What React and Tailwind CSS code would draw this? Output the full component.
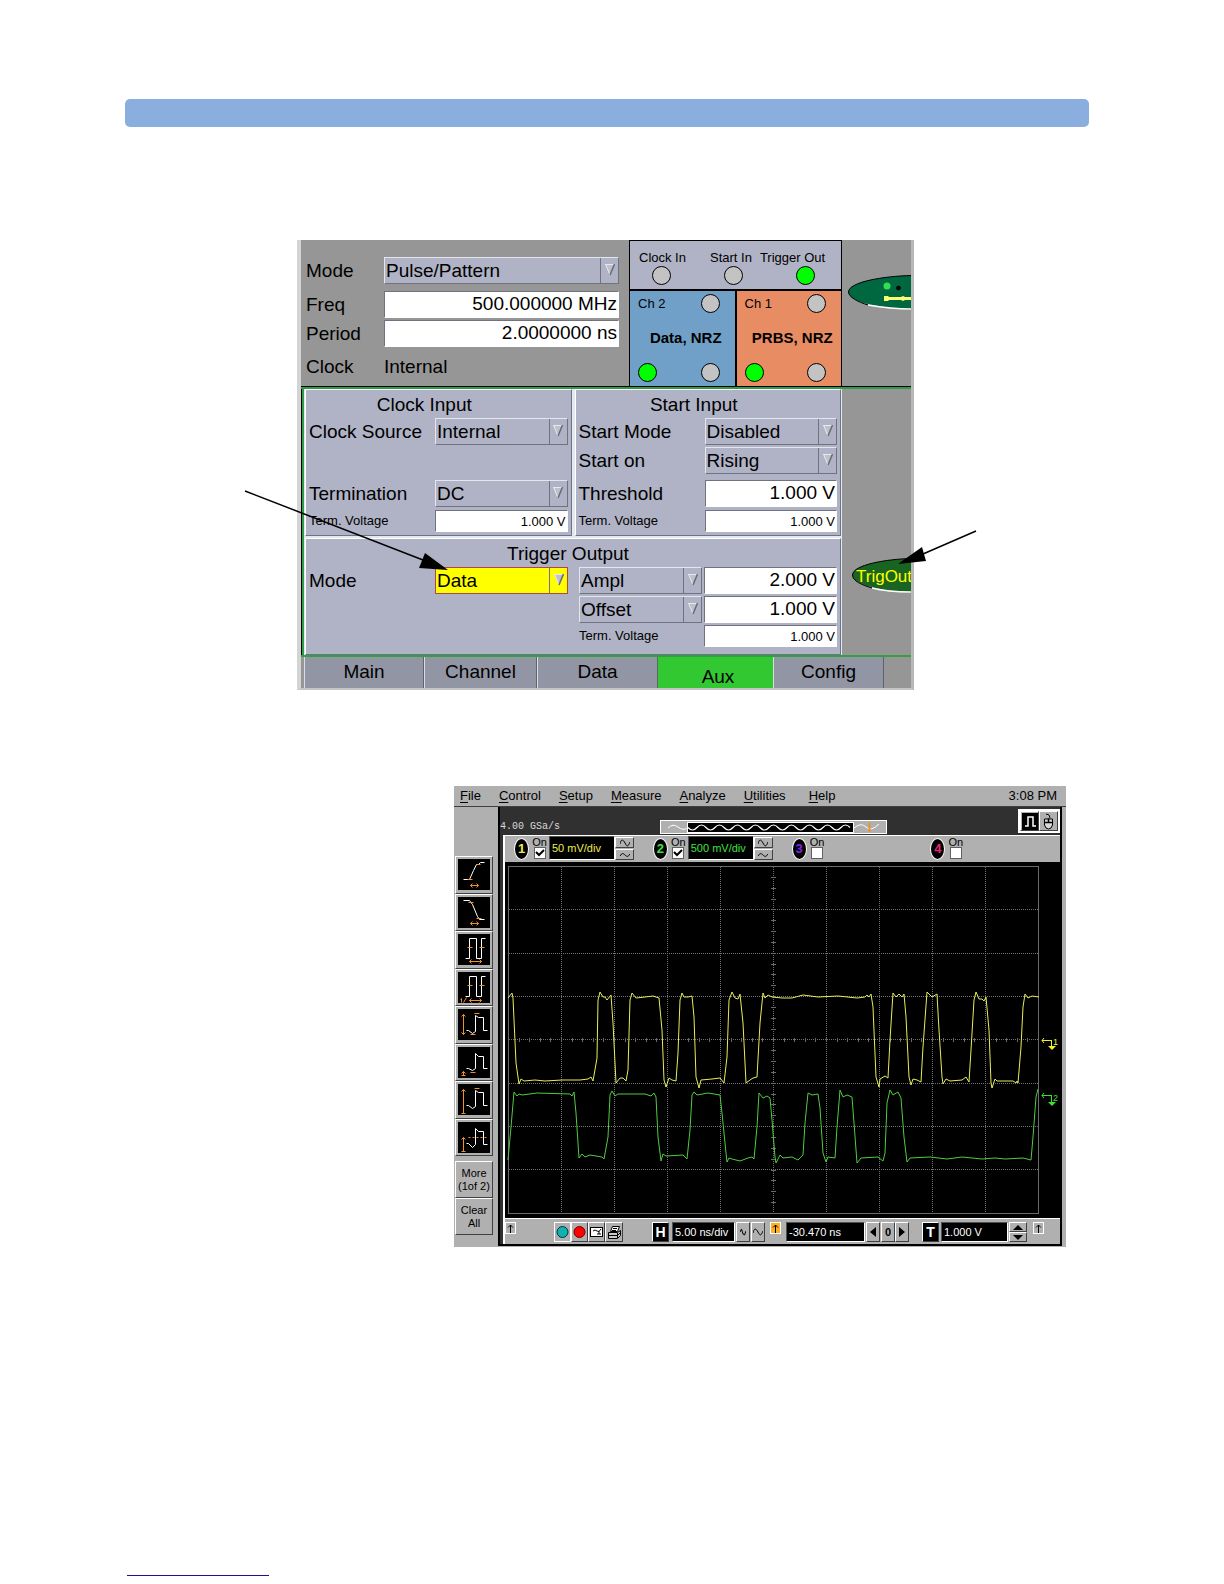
import React from 'react';
import clsx from 'clsx';

/* ---------- Pulse generator controls ---------- */

const SelectBox = ({ id, value, highlighted, label, className }) => (
  <div className={clsx('relative', className)}>
    <select
      id={id}
      aria-label={label}
      defaultValue={value}
      className={clsx(
        'block h-[27px] w-full appearance-none border pt-px pl-px pr-5 text-[19px] leading-6 text-black',
        highlighted
          ? 'border-[#b04848] bg-[#ffff00]'
          : 'border-t-[#e4e5ee] border-l-[#e4e5ee] border-r-[#70727e] border-b-[#70727e] bg-[#b0b3c5]'
      )}
    >
      <option>{value}</option>
    </select>
    <span className="pointer-events-none absolute inset-y-px right-px flex w-[18px] items-start justify-center border-l border-[#70727e] pt-[6px]">
      <svg width="10" height="12" viewBox="0 0 10 12">
        <path d="M0 0h10L5 11z" fill="#bfc0ca" />
        <path d="M0 .5h10M.5 0L5 11" stroke="#e8e8f0" fill="none" />
        <path d="M9.5 0L5 11" stroke="#686a74" strokeWidth="1.5" fill="none" />
      </svg>
    </span>
  </div>
);

const ValueBox = ({ id, value, small, className }) => (
  <input
    id={id}
    type="text"
    defaultValue={value}
    className={clsx(
      'block w-full min-w-0 border border-t-[#70727e] border-l-[#70727e] border-r-white border-b-white bg-white px-px text-right text-black',
      small ? 'h-[22px] text-[13px]' : 'h-[27px] text-[19px]',
      className
    )}
  />
);

const FieldLabel = ({ htmlFor, small, className, children }) => (
  <label
    htmlFor={htmlFor}
    className={clsx('whitespace-nowrap', small ? 'text-[13px] leading-5' : 'pt-px text-[19px] leading-6', className)}
  >
    {children}
  </label>
);

const Lamp = ({ on, className }) => (
  <span
    className={clsx(
      'block size-[19px] rounded-full border border-black',
      on ? 'bg-[#00ff00]' : 'bg-[#c3c3c3]',
      className
    )}
  />
);

const ChannelStatus = ({ name, signal, className }) => (
  <div className={clsx('flex flex-1 flex-col pl-2 pr-[15px] pt-[3px] pb-1', className)}>
    <div className="flex items-center justify-between">
      <span className="text-[13px]">{name}</span>
      <Lamp />
    </div>
    <div className="-mr-[14px] flex flex-1 items-center justify-center text-[15px] font-bold whitespace-nowrap">
      {signal}
    </div>
    <div className="flex justify-between">
      <Lamp on />
      <Lamp />
    </div>
  </div>
);

const GroupBox = ({ title, titleClass, className, children }) => (
  <fieldset
    className={clsx(
      'min-w-0 border border-t-white border-l-white border-r-[#6c7488] border-b-[#6c7488] bg-[#b0b3c5] px-[3px]',
      className
    )}
  >
    <div className={clsx('h-7 pt-[2px] text-center text-[19px] leading-[26px]', titleClass)}>{title}</div>
    {children}
  </fieldset>
);

const TABS = [
  { name: 'Main', width: 'w-[120px]' },
  { name: 'Channel', width: 'w-[113px]' },
  { name: 'Data', width: 'w-[121px]' },
  { name: 'Aux', width: 'w-[115px]', active: true },
  { name: 'Config', width: 'w-[111px]' },
];

const GeneratorPanel = () => (
  <section className="relative ml-[172px] max-w-[617px]">
    <div className="border-l-4 border-r-[3px] border-b-2 border-l-[#d4d4d4] border-r-[#b8b8b8] border-b-[#c4c4c4] bg-[#969696] text-black">
      {/* Source settings and output status */}
      <div className="flex h-[147px] border-b border-black">
        <div className="grid flex-1 grid-cols-[78px_minmax(0,1fr)] content-start items-center gap-y-[2px] pl-[5px] pr-[10px] pt-[17px]">
          <FieldLabel htmlFor="src-mode" className="mb-[5px]">Mode</FieldLabel>
          <SelectBox id="src-mode" value="Pulse/Pattern" className="mb-[5px]" />
          <FieldLabel htmlFor="src-freq">Freq</FieldLabel>
          <ValueBox id="src-freq" value="500.000000 MHz" />
          <FieldLabel htmlFor="src-period">Period</FieldLabel>
          <ValueBox id="src-period" value="2.0000000 ns" />
          <span className="pt-[6px] text-[19px] leading-6">Clock</span>
          <span className="pt-[6px] text-[19px] leading-6">Internal</span>
        </div>
        <div className="flex w-[213px] flex-col border border-b-0 border-black">
          <div className="h-[50px] border-b-2 border-black bg-[#b0b3c5] pt-[9px] text-[13px] leading-4">
            <div className="flex whitespace-nowrap pl-[9px]">
              <span>Clock In</span>
              <span className="ml-[24px]">Start In</span>
              <span className="ml-[8px]">Trigger Out</span>
            </div>
            <div className="flex gap-[53px] pl-[22px]">
              <Lamp />
              <Lamp />
              <Lamp on />
            </div>
          </div>
          <div className="flex flex-1">
            <ChannelStatus name="Ch 2" signal="Data, NRZ" className="border-r-2 border-black bg-[#70a0c8]" />
            <ChannelStatus name="Ch 1" signal="PRBS, NRZ" className="bg-[#e88c64]" />
          </div>
        </div>
        <div className="flex w-[69px] justify-end pt-[35px]">
          <svg width="63" height="35" viewBox="0 0 63 35">
            <path d="M64 .5C36 1 .5 7 .5 17S30 33 64 34.500z" fill="#006840" />
            <path d="M.5 17C.5 7 36 1 64 .5" fill="none" stroke="#000" />
            <path d="M.5 17C.5 22 10 27 20 30" fill="none" stroke="#000" />
            <path d="M20 30C32 32 44 34 64 34" fill="none" stroke="#fff" strokeWidth="1.500" />
            <circle cx="39" cy="11" r="3.500" fill="#30e050" />
            <path d="M48 13h5M50.500 10.500v5M49 11.500h3v3h-3z" stroke="#000" />
            <path d="M36 21h4l1 1h12l2-1 2 1h7v3h-7l-2 1-2-1H41l-1 1h-4z" fill="#ffff70" />
          </svg>
        </div>
      </div>

      {/* Auxiliary settings */}
      <div className="flex border-t-2 border-[#2f9a48]">
        <div className="flex min-w-0 flex-1 border-l border-black">
          <div className="flex min-w-0 flex-1 flex-col gap-[2px] border-l-2 border-[#2f9a48] bg-[#e6e8f0] px-px">
            <div className="grid grid-cols-2 gap-[3px]">
              <GroupBox title="Clock Input" titleClass="pr-[28px]" className="h-[147px]">
                <div className="grid grid-cols-[126px_minmax(0,1fr)] items-center">
                  <FieldLabel htmlFor="clk-src">Clock Source</FieldLabel>
                  <SelectBox id="clk-src" value="Internal" />
                  <FieldLabel htmlFor="clk-term" className="mt-[35px] mb-[3px]">Termination</FieldLabel>
                  <SelectBox id="clk-term" value="DC" className="mt-[35px] mb-[3px]" />
                  <FieldLabel htmlFor="clk-volt" small>Term. Voltage</FieldLabel>
                  <ValueBox id="clk-volt" value="1.000 V" small />
                </div>
              </GroupBox>
              <GroupBox title="Start Input" titleClass="pr-[28px]" className="h-[147px]">
                <div className="grid grid-cols-[126px_minmax(0,1fr)] items-center">
                  <FieldLabel htmlFor="start-mode">Start Mode</FieldLabel>
                  <SelectBox id="start-mode" value="Disabled" />
                  <FieldLabel htmlFor="start-on" className="mt-[2px]">Start on</FieldLabel>
                  <SelectBox id="start-on" value="Rising" className="mt-[2px]" />
                  <FieldLabel htmlFor="start-thr" className="mt-[6px] mb-[3px]">Threshold</FieldLabel>
                  <ValueBox id="start-thr" value="1.000 V" className="mt-[6px] mb-[3px]" />
                  <FieldLabel htmlFor="start-volt" small>Term. Voltage</FieldLabel>
                  <ValueBox id="start-volt" value="1.000 V" small />
                </div>
              </GroupBox>
            </div>
            <GroupBox title="Trigger Output" titleClass="pr-[10px]" className="h-[117px]">
              <div className="grid grid-cols-[126px_133px_minmax(0,1fr)_133px] items-center gap-y-[2px]">
                <FieldLabel htmlFor="trig-mode">Mode</FieldLabel>
                <SelectBox id="trig-mode" value="Data" highlighted />
                <SelectBox label="Amplitude type" value="Ampl" className="ml-[11px] mr-[2px]" />
                <ValueBox id="trig-ampl" value="2.000 V" />
                <SelectBox label="Offset type" value="Offset" className="col-start-3 ml-[11px] mr-[2px]" />
                <ValueBox id="trig-offset" value="1.000 V" />
                <FieldLabel htmlFor="trig-volt" small className="col-start-3 pl-[11px]">Term. Voltage</FieldLabel>
                <ValueBox id="trig-volt" value="1.000 V" small />
              </div>
            </GroupBox>
          </div>
        </div>
        <div className="flex w-[69px] justify-end pt-[169px]">
          <button type="button" aria-label="TrigOut" className="h-[36px] w-[59px]">
            <svg width="59" height="36" viewBox="0 0 59 36">
              <path d="M60 .5C34 1 .5 7 .5 17S30 33 60 34.500z" fill="#186420" />
              <path d="M.5 17C.5 7 34 1 60 .5" fill="none" stroke="#000" />
              <path d="M.5 17C.5 23 10 27 20 30" fill="none" stroke="#000" />
              <path d="M20 30C32 33 44 34 60 34" fill="none" stroke="#fff" strokeWidth="1.500" />
              <text x="4" y="24" fontSize="17" fill="#ffff00">TrigOut</text>
            </svg>
          </button>
        </div>
      </div>

      {/* Page tabs */}
      <nav className="flex h-[33px] border-t-2 border-[#30a040] pl-[3px]">
        {TABS.map((tab) => (
          <button
            key={tab.name}
            type="button"
            className={clsx(
              'border-l text-[19px]',
              tab.width,
              tab.active
                ? 'border-[#32c832] bg-[#32c832] pt-[6px] pl-1'
                : 'border-r border-l-[#dcdce4] border-r-[#60626c] bg-[#9296a4]'
            )}
          >
            {tab.name}
          </button>
        ))}
      </nav>
    </div>

    {/* Callout arrows */}
    <svg className="pointer-events-none absolute top-0 left-0 overflow-visible" width="617" height="450" viewBox="0 0 617 450">
      <path d="M-52 251L126 320M679 291L626 314" stroke="#000" strokeWidth="1.500" />
      <path d="M151 330L128 313 122 328zM601 324L625 307 629 321z" fill="#000" />
    </svg>
  </section>
);

/* ---------- Oscilloscope ---------- */

const BEVEL = 'border-t-white border-l-white border-r-[#404040] border-b-[#404040]';

const MENU = ['File', 'Control', 'Setup', 'Measure', 'Analyze', 'Utilities', 'Help'];

const MEASUREMENTS = [
  {
    name: 'Rise time',
    white: 'M5 20h6l4-9 3-6h2l2-2h4',
    orange: 'M9 20h5M18 5h4M12 26h8M14 24l-2 2 2 2M18 24l2 2-2 2',
  },
  {
    name: 'Fall time',
    white: 'M5 3h6l3 4 5 12 2 3h5',
    orange: 'M10 5h5M18 21h5M12 26h8M14 24l-2 2 2 2M18 24l2 2-2 2',
  },
  {
    name: 'Period',
    white: 'M7 24h4V4h7v20h5V4h4',
    orange: 'M9 13h5M21 13h5M11 27h12M13 25l-2 2 2 2M21 25l2 2-2 2',
  },
  {
    name: 'Frequency',
    white: 'M7 24h4V4h7v20h5V4h4',
    orange: 'M9 13h5M21 13h5M11 28h12M13 26l-2 2 2 2M21 26l2 2-2 2M2 27l1-1v4M8 25l-3 5',
  },
  {
    name: 'V p-p',
    white: 'M8 21h2l4 3 3-2V6l3 2h5v13h4',
    orange: 'M5 5v20M3 7l2-2 2 2M3 23l2 2 2-2M16 4h5M12 25h5',
  },
  {
    name: 'V min',
    white: 'M8 21h2l4 2 3-2V6l3 3h5v12h4',
    orange: 'M5 24v4M3 26l2-2 2 2M3 28h4M12 25h5',
  },
  {
    name: 'V max',
    white: 'M8 21h2l4 3 3-2V6l3 2h5v13h4',
    orange: 'M5 5v24M3 7l2-2 2 2M3 29h4M16 4h5',
  },
  {
    name: 'V avg',
    white: 'M8 21h2l4 4 3-3V6l3 3h5v13h4',
    orange: 'M5 15v14M3 17l2-2 2 2M3 29h4M10 15h2M14 15h2M18 15h2M22 15h2M26 15h2',
  },
];

const CHANNELS = [
  { number: 1, text: 'text-[#ecec50]', scale: '50 mV/div', on: true },
  { number: 2, text: 'text-[#40e040]', scale: '500 mV/div', on: true },
  { number: 3, text: 'text-[#8820f0]', on: false },
  { number: 4, text: 'text-[#e02878]', on: false },
];

const TRACE_1 =
  '3,136 7,131 8,136 11,201 14,222 16,217 19,219 30,218 40,219 57,218 75,218 83,217 86,215 88,219 92,196 93,138 95,130 98,135 100,135 102,138 106,133 108,161 111,221 115,216 118,216 121,219 123,208 125,138 127,131 131,136 140,135 148,134 154,136 157,168 159,218 161,225 164,216 167,218 171,219 173,191 175,138 177,131 179,135 183,135 187,134 189,155 191,215 194,226 196,218 207,217 215,216 219,221 222,195 224,138 227,130 230,136 233,137 235,132 238,161 241,221 245,218 248,216 252,215 255,161 258,131 260,136 263,133 267,135 277,136 287,136 298,133 313,135 333,134 352,136 360,135 362,133 364,135 366,132 368,145 371,215 374,225 375,217 380,214 383,216 385,178 388,131 391,135 394,132 397,135 399,132 401,155 404,215 406,223 408,217 412,218 416,220 418,185 422,130 427,135 432,132 434,168 437,215 438,222 441,217 445,219 457,218 461,215 464,220 466,188 469,138 471,130 474,137 477,137 479,139 481,135 484,168 486,221 487,226 490,217 492,219 508,219 511,221 512,219 513,221 516,185 518,145 520,132 523,136 527,134 534,135';

const TRACE_2 =
  '3,298 6,265 9,230 12,234 14,232 17,233 32,231 65,232 67,234 69,230 71,251 74,296 77,292 80,295 85,293 97,295 99,297 103,275 105,233 107,229 110,234 113,232 140,232 146,234 149,231 151,235 153,275 156,299 158,292 161,294 178,293 182,297 185,268 187,233 189,230 192,233 203,231 215,233 217,251 221,291 222,300 224,296 227,297 235,299 243,296 247,295 249,297 252,265 254,231 258,236 262,234 265,236 267,258 270,295 271,301 275,293 278,296 287,295 293,298 298,293 300,261 303,231 307,233 313,232 315,246 318,291 321,300 323,295 330,296 332,265 335,228 338,235 342,233 347,235 349,261 352,301 356,296 373,295 378,299 380,291 382,241 385,228 388,233 393,230 396,236 399,275 402,300 405,296 425,295 442,297 457,295 477,297 490,296 500,297 518,296 526,298 528,275 531,235 533,227';

const TimeWave = ({ tall }) => (
  <svg width="10" height="8" viewBox="0 0 10 8" fill="none" stroke="#000">
    <path d={tall ? 'M0 5C1 0 3 0 5 4s3 4 5-1' : 'M0 5c2-3 3-3 5-1s3 2 5-1'} />
  </svg>
);

const ToolButton = ({ label, className, children }) => (
  <button
    type="button"
    aria-label={label}
    className={clsx('flex shrink-0 items-center justify-center border bg-[#b0b0b0]', BEVEL, className)}
  >
    {children}
  </button>
);

const ReadOut = ({ label, value, className }) => (
  <input
    type="text"
    aria-label={label}
    defaultValue={value}
    className={clsx(
      'block min-w-0 border border-t-[#505050] border-l-[#505050] border-r-white border-b-white bg-black px-[2px] text-[11px]',
      className
    )}
  />
);

const Marker = ({ className }) => (
  <span className={clsx('flex h-3 w-[11px] shrink-0 items-center justify-center border border-white', className)}>
    <svg width="7" height="9" viewBox="0 0 7 9" fill="none" stroke="#000">
      <path d="M3.500 9V1M1 3.500L3.500 1 6 3.500" />
    </svg>
  </span>
);

const ChannelControl = ({ channel }) => (
  <div className="flex items-start pl-[9px]">
    <span
      className={clsx(
        'mt-[2px] flex h-[22px] w-[15px] items-center justify-center rounded-[50%] border border-white bg-black text-[13px] font-bold',
        channel.text
      )}
    >
      {channel.number}
    </span>
    <label className="ml-[3px] flex w-[15px] flex-col items-center pt-px text-[11px] leading-[10px] text-black">
      On
      <input
        type="checkbox"
        defaultChecked={channel.on}
        className="peer size-3 appearance-none border border-[#606060] bg-white"
      />
      <svg
        className="pointer-events-none -mt-[11px] hidden peer-checked:block"
        width="10"
        height="10"
        viewBox="0 0 10 10"
        fill="none"
        stroke="#000"
        strokeWidth="2"
      >
        <path d="M1 4l3 3 5-5" />
      </svg>
    </label>
    {channel.on && (
      <>
        <ReadOut
          label={`Channel ${channel.number} scale`}
          value={channel.scale}
          className={clsx('ml-[2px] h-6 w-[66px]', channel.text)}
        />
        <div className="flex flex-col gap-px pt-px">
          <ToolButton label="Coarser scale" className="h-[11px] w-[19px]">
            <TimeWave tall />
          </ToolButton>
          <ToolButton label="Finer scale" className="h-[11px] w-[19px]">
            <TimeWave />
          </ToolButton>
        </div>
      </>
    )}
  </div>
);

const columns = [1, 2, 3, 4, 5, 6, 7, 8, 9];
const rows = [1, 2, 3, 4, 5, 6, 7];
const ticksX = Array.from({ length: 49 }, (_, i) => i + 1);
const ticksY = Array.from({ length: 31 }, (_, i) => i + 1);

const Display = () => (
  <svg className="block w-full bg-black" viewBox="0 0 555 356" fill="none">
    <rect x="3.500" y="4.500" width="530" height="347" stroke="#6a6a6a" />
    <g stroke="#707070" strokeDasharray="1 1">
      {columns.map((c) => (
        <path key={c} d={`M${c * 53 + 3.5} 5v346`} />
      ))}
      {rows.map((r) => (
        <path key={r} d={`M4 ${Math.round(r * 43.3) + 4.5}h529`} />
      ))}
    </g>
    <g stroke="#6a6a6a">
      {ticksX.map((t) => (
        <path key={t} d={`M${Math.round(t * 10.6) + 3.5} 176v4`} />
      ))}
      {ticksY.map((t) => (
        <path key={t} d={`M266 ${Math.round(t * 10.84) + 4.5}h5`} />
      ))}
    </g>
    <polyline points={TRACE_1} stroke="#e6ee58" strokeWidth="1" />
    <polyline points={TRACE_2} stroke="#50cc40" strokeWidth="1" />
    <g stroke="#f0f030">
      <path d="M537 178.500h9M539 176l-2 2.500 2 2.500M546.500 178v6" />
      <path d="M543 184h8l-4 4z" fill="#f0f030" stroke="none" />
    </g>
    <text x="548" y="183" fontSize="9" fill="#f0f030">1</text>
    <g stroke="#40e030">
      <path d="M537 233.500h9M539 231l-2 2.500 2 2.500M546.500 233v7" />
      <path d="M543 240h8l-4 4z" fill="#40e030" stroke="none" />
    </g>
    <text x="548" y="239" fontSize="9" fill="#40e030">2</text>
  </svg>
);

const MemoryBar = () => (
  <svg width="227" height="14" viewBox="0 0 227 14" fill="none">
    <rect x=".5" y=".5" width="226" height="13" fill="#b0b0b0" stroke="#fff" />
    <path d="M8 8q5-5 10-1t10 1" stroke="#fff" />
    <rect x="27.500" y="2.500" width="166" height="10" fill="#000" stroke="#fff" />
    <path
      d="M28 7.500q4.500 5 9 0t9 0 9 0 9 0 9 0 9 0 9 0 9 0 9 0 9 0 9 0 9 0 9 0 9 0 9 0 9 0 9 0 9 0"
      stroke="#fff"
      strokeWidth="1.200"
    />
    <path d="M194 8q7-6 12-1t13-3" stroke="#fff" />
    <path d="M209.500 3v9" stroke="#f09020" strokeWidth="2" />
  </svg>
);

const Oscilloscope = () => (
  <section className="mt-24 ml-[329px] max-w-[612px] bg-[#b0b0b0] text-black">
    <nav className="flex h-5 items-center gap-[18px] px-[6px] text-[13px]">
      {MENU.map((item) => (
        <button key={item} type="button" className="last-of-type:ml-[5px]">
          <span className="underline underline-offset-2">{item[0]}</span>
          {item.slice(1)}
        </button>
      ))}
      <span className="ml-auto mr-[3px]">3:08 PM</span>
    </nav>

    <div className="flex border-t border-[#404040]">
      {/* Measurement toolbar */}
      <aside className="w-11 shrink-0 pt-[49px] pr-[5px] pl-px">
        <div className="flex h-[300px] flex-col">
          {MEASUREMENTS.map((m) => (
            <ToolButton key={m.name} label={m.name} className="w-full flex-1">
              <svg className="bg-black" width="32" height="31" viewBox="0 0 32 31" fill="none">
                <g transform="translate(.5 .5)">
                  <path d={m.white} stroke="#fff" />
                  <path d={m.orange} stroke="#f09028" />
                </g>
              </svg>
            </ToolButton>
          ))}
        </div>
        <button type="button" className={clsx('mt-[5px] block h-[37px] w-full border text-[11px] leading-[13px]', BEVEL)}>
          More
          <br />
          (1of 2)
        </button>
        <button type="button" className={clsx('block h-[37px] w-full border text-[11px] leading-[13px]', BEVEL)}>
          Clear
          <br />
          All
        </button>
      </aside>

      <div className="mb-px mr-[4px] min-w-0 flex-1 border-x-2 border-b-2 border-black bg-[#303030]">
        {/* Acquisition status */}
        <div className="flex h-7 items-start">
          <span className="mt-[14px] w-[160px] font-['Liberation_Mono',monospace] text-[10px] leading-3 text-[#d8d8d8]">
            4.00 GSa/s
          </span>
          <span className="mt-[13px]">
            <MemoryBar />
          </span>
          <div className="mt-[2px] ml-auto flex border-2 border-white bg-[#b0b0b0]">
            <ToolButton label="Autoscale" className="h-5 w-[19px]">
              <svg className="bg-black" width="16" height="17" viewBox="0 0 16 17" fill="none" stroke="#fff">
                <path d="M3 13h3V4h5v9h3" strokeWidth="1.500" />
              </svg>
            </ToolButton>
            <ToolButton label="Mouse" className="h-5 w-[19px]">
              <svg width="13" height="17" viewBox="0 0 13 17" fill="none" stroke="#000">
                <path d="M4 1q4 0 4 4M2.500 6h8v6q-1 4-4 4t-4-4z" fill="#d8d8d8" />
                <path d="M2.500 9.500h8M6.500 5.500v4" strokeWidth="1.500" />
              </svg>
            </ToolButton>
          </div>
        </div>

        <div className="ml-[3px] border-l-2 border-t border-white bg-[#b0b0b0]">
          <div className="grid h-[26px] grid-cols-4">
            {CHANNELS.map((c) => (
              <ChannelControl key={c.number} channel={c} />
            ))}
          </div>
          <Display />

          {/* Time base and trigger */}
          <div className="flex h-[26px] items-start border-t border-white pt-[3px]">
            <Marker />
            <div className="ml-[38px] flex">
              <ToolButton label="Run" className="h-5 w-[17px] border-r-white border-b-white">
                <svg width="13" height="14" viewBox="0 0 13 14">
                  <circle cx="6.500" cy="7" r="5.500" fill="#10b0b0" stroke="#003838" />
                </svg>
              </ToolButton>
              <ToolButton label="Stop" className="h-5 w-[17px]">
                <svg width="13" height="14" viewBox="0 0 13 14">
                  <circle cx="6.500" cy="7" r="5.500" fill="#ff0000" stroke="#700000" />
                </svg>
              </ToolButton>
              <ToolButton label="Clear display" className="h-5 w-[17px]">
                <svg width="14" height="13" viewBox="0 0 14 13" fill="#fff" stroke="#000">
                  <rect x=".5" y="1.500" width="12" height="9" />
                  <path d="M3 5q2-2 4 0t4-2M7 8h4M9 5v3" fill="none" />
                </svg>
              </ToolButton>
              <ToolButton label="Print" className="h-5 w-[18px]">
                <svg width="15" height="15" viewBox="0 0 15 15" fill="#fff" stroke="#000">
                  <path d="M5.500 1.500h7l-2 5h-7z" />
                  <path d="M1.500 7.500h9l3-2v5l-3 3h-9z" fill="#c8c8c8" />
                  <path d="M6 3.500h4M5 5.500h4M1.500 10.500h9l3-3M10.500 8v5" fill="none" />
                </svg>
              </ToolButton>
            </div>
            <ToolButton label="Horizontal" className="ml-[29px] h-5 w-[17px]">
              <span className="block w-full bg-black text-[14px] leading-[18px] font-bold text-white">H</span>
            </ToolButton>
            <ReadOut label="Time scale" value="5.00 ns/div" className="ml-[3px] h-5 w-[63px] text-white" />
            <ToolButton label="Faster sweep" className="ml-px h-5 w-[14px]">
              <svg width="6" height="10" viewBox="0 0 6 10" fill="none" stroke="#000">
                <path d="M0 5l1.500-3L3 7l1.500 1L6 4" />
              </svg>
            </ToolButton>
            <ToolButton label="Slower sweep" className="mr-[5px] ml-px h-5 w-[14px]">
              <TimeWave tall />
            </ToolButton>
            <Marker className="bg-[#ffb020]" />
            <ReadOut label="Delay" value="-30.470 ns" className="ml-[5px] h-5 w-[79px] text-white" />
            <ToolButton label="Earlier" className="ml-px h-5 w-[14px]">
              <svg width="6" height="10" viewBox="0 0 6 10"><path d="M6 0v10L0 5z" /></svg>
            </ToolButton>
            <ToolButton label="Zero delay" className="ml-px h-5 w-[14px] text-[11px] font-bold">
              0
            </ToolButton>
            <ToolButton label="Later" className="h-5 w-[14px]">
              <svg width="6" height="10" viewBox="0 0 6 10"><path d="M0 0v10l6-5z" /></svg>
            </ToolButton>
            <ToolButton label="Trigger" className="ml-[13px] h-5 w-[17px]">
              <span className="block w-full bg-black text-[14px] leading-[18px] font-bold text-white">T</span>
            </ToolButton>
            <ReadOut label="Trigger level" value="1.000 V" className="ml-[2px] h-5 w-[67px] text-white" />
            <div className="ml-px flex flex-col">
              <ToolButton label="Level up" className="h-[10px] w-[18px]">
                <svg width="10" height="5" viewBox="0 0 10 5"><path d="M0 5h10L5 0z" /></svg>
              </ToolButton>
              <ToolButton label="Level down" className="h-[10px] w-[18px]">
                <svg width="10" height="5" viewBox="0 0 10 5"><path d="M0 0h10L5 5z" /></svg>
              </ToolButton>
            </div>
            <Marker className="ml-[6px]" />
          </div>
        </div>
      </div>
    </div>
  </section>
);

const App = () => (
  <main className="min-h-screen bg-white pt-[99px] pr-[135px] pb-2 pl-[125px] font-['Liberation_Sans',Arial,sans-serif]">
    <div className="mb-[113px] h-7 rounded-[5px] bg-[#8aaede]" />
    <GeneratorPanel />
    <Oscilloscope />
    <div className="mt-[328px] ml-[2px] h-px w-[142px] bg-[#1c148c]" />
  </main>
);

export default App;
